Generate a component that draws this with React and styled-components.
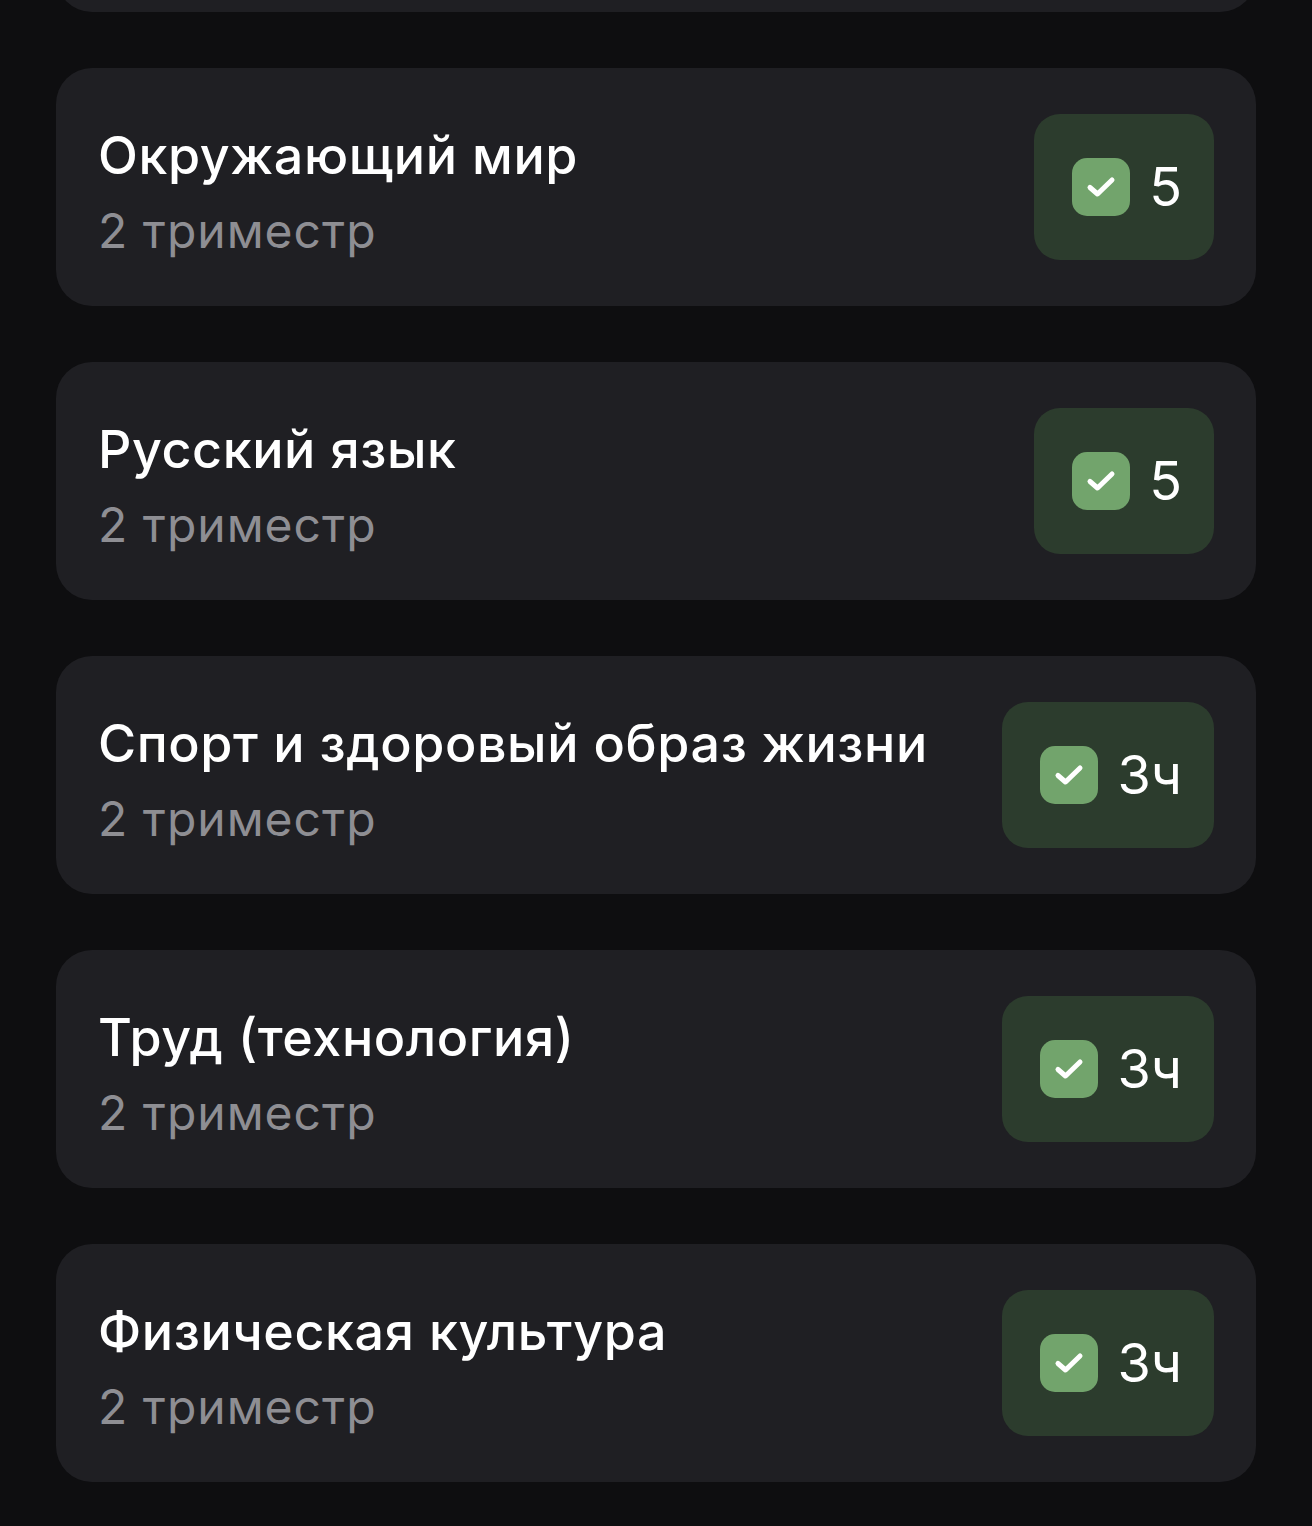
import React from "react";
import styled, { createGlobalStyle } from "styled-components";

const Global = createGlobalStyle`
  html, body { margin: 0; padding: 0; background: #0e0e10; }
  body { font-family: Inter, "Noto Sans", "Liberation Sans", sans-serif; -webkit-font-smoothing: antialiased; }
`;

const Page = styled.div`
  width: 1312px;
  height: 1526px;
  overflow: hidden;
  background: #0e0e10;
`;

const List = styled.div`
  display: flex;
  flex-direction: column;
  gap: 56px;
  padding: 0 56px;
  margin-top: -226px;
`;

const Card = styled.div`
  box-sizing: border-box;
  height: 238px;
  background: #1f1f23;
  border-radius: 36px;
  padding: 0 42px 0 42px;
  display: flex;
  align-items: center;
  justify-content: space-between;
`;

const Info = styled.div`
  align-self: stretch;
  box-sizing: border-box;
  padding-top: 57px;
  display: flex;
  flex-direction: column;
  gap: 15px;
`;

const Title = styled.div`
  color: #ffffff;
  font-size: 52px;
  font-weight: 500;
  letter-spacing: 0.6px;
  line-height: 62px;
  white-space: nowrap;
`;

const Sub = styled.div`
  color: #8e8e93;
  font-size: 48px;
  font-weight: 400;
  letter-spacing: 1px;
  line-height: 58px;
`;

const Badge = styled.div`
  box-sizing: border-box;
  height: 146px;
  border-radius: 26px;
  background: #2c3c2d;
  display: flex;
  align-items: center;
  gap: 19px;
  padding: 0 32px 0 38px;
`;

const Check = styled.div`
  width: 58px;
  height: 58px;
  border-radius: 15px;
  background: #72a46c;
  display: flex;
  align-items: center;
  justify-content: center;
`;

const Grade = styled.div`
  color: #ffffff;
  font-size: 54px;
  font-weight: 400;
  line-height: 1;
`;

const items = [
  { title: "Окружающий мир", grade: "5" },
  { title: "Русский язык", grade: "5" },
  { title: "Спорт и здоровый образ жизни", grade: "3ч" },
  { title: "Труд (технология)", grade: "3ч" },
  { title: "Физическая культура", grade: "3ч" },
];

export default function App() {
  return (
    <Page>
      <Global />
      <List>
        <Card aria-hidden="true" />
        {items.map((it) => (
          <Card key={it.title}>
            <Info>
              <Title>{it.title}</Title>
              <Sub>2 триместр</Sub>
            </Info>
            <Badge>
              <Check>
                <svg width="30" height="22" viewBox="0 0 30 22" fill="none">
                  <path d="M4 11.5 L11.5 18 L26 4" stroke="#fff" strokeWidth="5" strokeLinecap="round" strokeLinejoin="round" />
                </svg>
              </Check>
              <Grade>{it.grade}</Grade>
            </Badge>
          </Card>
        ))}
      </List>
    </Page>
  );
}
